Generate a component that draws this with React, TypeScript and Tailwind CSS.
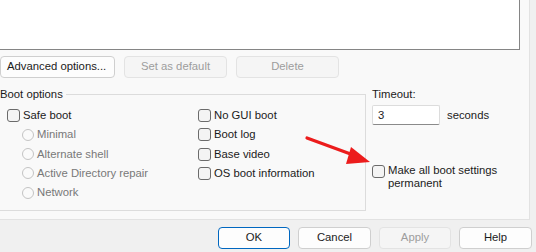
import React from "react";

function Check() {
  return <div className="w-[13px] h-[13px] shrink-0 rounded-[3px] border border-[#6b6b6b] bg-[#f4f4f4]" />;
}
function Radio() {
  return <div className="w-[12px] h-[12px] shrink-0 rounded-full border border-[#c4c4c4] bg-[#fafafa]" />;
}

function Btn({ label, w, disabled, def }: { label: string; w: string; disabled?: boolean; def?: boolean }) {
  const base = "h-[22px] rounded-[4px] border flex items-center justify-center leading-none shrink-0 whitespace-nowrap " + w + " ";
  if (disabled) return <div className={base + "bg-[#f5f5f5] border-[#e3e3e3] text-[#9d9d9d]"}>{label}</div>;
  if (def) return <div className={base + "bg-[#fdfdfd] border-[#0067c0] text-[#1b1b1b]"}>{label}</div>;
  return <div className={base + "bg-[#fdfdfd] border-[#cfcfcf] text-[#1b1b1b]"}>{label}</div>;
}

function Row({ children, cls = "" }: { children: React.ReactNode; cls?: string }) {
  return <div className={"h-[19.25px] flex items-center whitespace-nowrap " + cls}>{children}</div>;
}

export default function App() {
  return (
    <div className="w-[536px] h-[252px] bg-[#f0f0f0] overflow-hidden relative font-['Liberation_Sans',Arial,sans-serif] text-[11.3px] text-[#1b1b1b]">
      <div className="w-[530px] h-[220px] bg-[#f9f9f9] border-r border-b border-[#e2e2e2] flex flex-col">
        <div className="w-[520px] h-[50px] bg-white border-r border-b border-[#858585] shrink-0" />
        <div className="flex gap-[9px] mt-[6px]">
          <div className="flex justify-start pl-[6px] h-[22px] w-[115px] rounded-[4px] border border-[#cfcfcf] bg-[#fdfdfd] items-center leading-none whitespace-nowrap">Advanced options...</div>
          <Btn label="Set as default" w="w-[103px]" disabled />
          <Btn label="Delete" w="w-[103px]" disabled />
        </div>
        <div className="flex mt-[9px]">
          <div className="w-[366px] mt-[7px] h-[117px] border-t border-r border-b border-[#dcdcdc] relative">
            <div className="absolute left-0 top-[-8px] bg-[#f9f9f9] pr-[3px] leading-[14px]">Boot options</div>
            <div className="flex pt-[11px]">
              <div className="w-[198px] pl-[7px] flex flex-col">
                <Row><Check /><span className="ml-[3px]">Safe boot</span></Row>
                <Row cls="pl-[15px] text-[#787878]"><Radio /><span className="ml-[3px]">Minimal</span></Row>
                <Row cls="pl-[15px] text-[#787878]"><Radio /><span className="ml-[3px]">Alternate shell</span></Row>
                <Row cls="pl-[15px] text-[#787878]"><Radio /><span className="ml-[3px]">Active Directory repair</span></Row>
                <Row cls="pl-[15px] text-[#787878]"><Radio /><span className="ml-[3px]">Network</span></Row>
              </div>
              <div className="flex flex-col">
                <Row><Check /><span className="ml-[3px]">No GUI boot</span></Row>
                <Row><Check /><span className="ml-[3px]">Boot log</span></Row>
                <Row><Check /><span className="ml-[3px]">Base video</span></Row>
                <Row><Check /><span className="ml-[3px]">OS boot information</span></Row>
              </div>
            </div>
          </div>
          <div className="ml-[6px] flex flex-col">
            <div className="leading-[15px]">Timeout:</div>
            <div className="flex items-center mt-[3px]">
              <div className="w-[68px] h-[20px] bg-white border border-[#dcdcdc] border-b-[#8a8a8a] rounded-[2px] pl-[5px] flex items-center">3</div>
              <span className="ml-[7px]">seconds</span>
            </div>
            <div className="flex mt-[39px]">
              <div className="mt-[1px]"><Check /></div>
              <div className="ml-[3px] flex flex-col whitespace-nowrap">
                <span className="leading-[13px]">Make all boot settings</span>
                <span className="leading-[12px]">permanent</span>
              </div>
            </div>
          </div>
        </div>
      </div>
      <div className="flex justify-end gap-[8px] mt-[7px] pr-[4px]">
        <Btn label="OK" w="w-[72px]" def />
        <Btn label="Cancel" w="w-[73px]" />
        <Btn label="Apply" w="w-[72px]" disabled />
        <Btn label="Help" w="w-[73px]" />
      </div>
      <svg className="absolute left-0 top-0 pointer-events-none" width="536" height="252">
        <line x1="307" y1="138" x2="356" y2="156" stroke="#ec1c1c" strokeWidth="3.2" strokeLinecap="round" />
        <polygon points="370,162 351,147 346,164" fill="#ec1c1c" />
      </svg>
    </div>
  );
}
